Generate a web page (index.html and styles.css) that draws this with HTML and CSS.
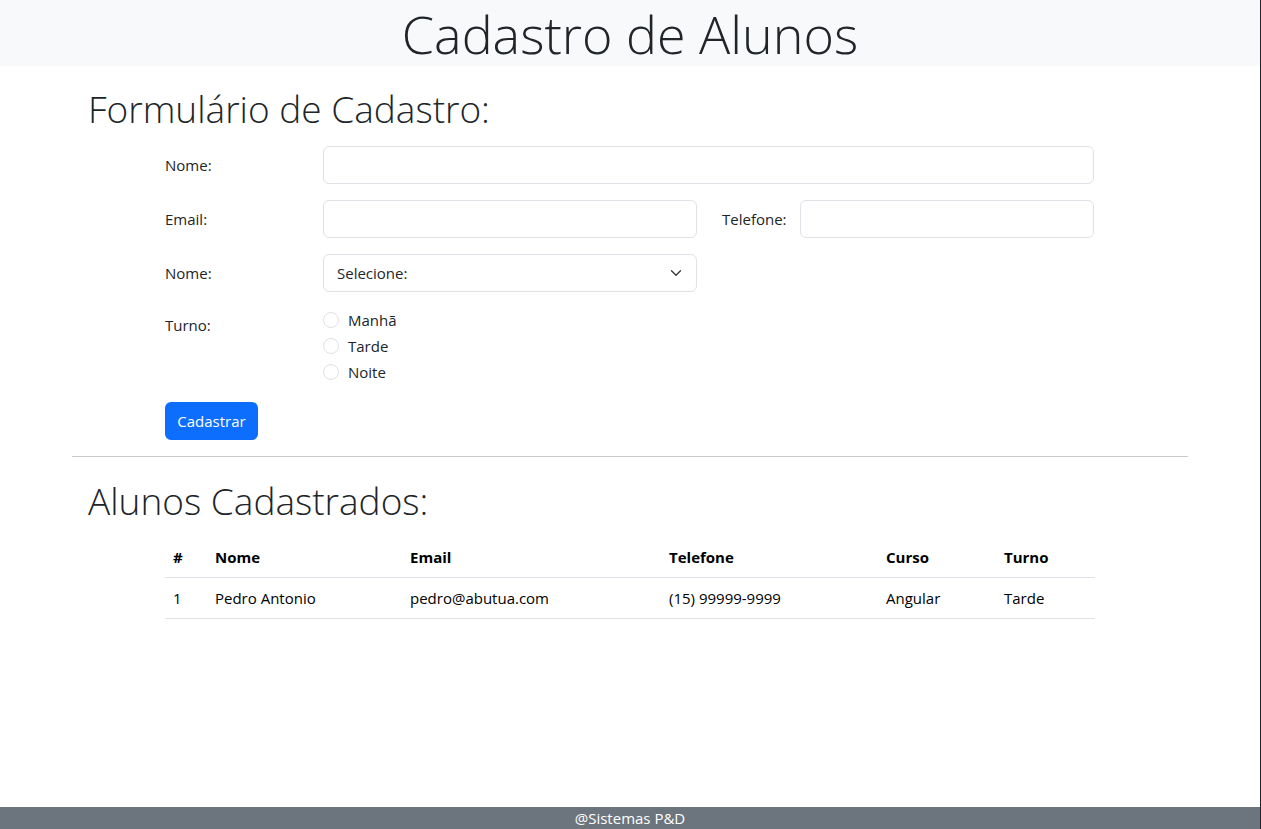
FILE: index.html
```html
<!DOCTYPE html>
<html lang="pt-BR">
<head>
<meta charset="utf-8">
<title>Cadastro de Alunos</title>
<link rel="stylesheet" href="styles.css">
</head>
<body>
<div class="page">
  <header class="topbar">
    <h1 class="topbar-title">Cadastro de Alunos</h1>
  </header>
  <main class="container">
    <h2 class="section-title">Formulário de Cadastro:</h2>
    <form class="form">
      <div class="form-row">
        <label class="form-label">Nome:</label>
        <input class="form-control full" type="text">
      </div>
      <div class="form-row">
        <label class="form-label">Email:</label>
        <input class="form-control half" type="text">
        <label class="form-label inline">Telefone:</label>
        <input class="form-control phone" type="text">
      </div>
      <div class="form-row">
        <label class="form-label">Nome:</label>
        <div class="form-select half">
          <span>Selecione:</span>
          <svg class="chevron" width="12" height="12" viewBox="0 0 16 16"><path d="M2 5l6 6 6-6" fill="none" stroke="#343a40" stroke-width="1.8" stroke-linecap="round" stroke-linejoin="round"/></svg>
        </div>
      </div>
      <div class="form-row top">
        <label class="form-label">Turno:</label>
        <div class="radios">
          <label class="radio"><span class="radio-circle"></span>Manhã</label>
          <label class="radio"><span class="radio-circle"></span>Tarde</label>
          <label class="radio"><span class="radio-circle"></span>Noite</label>
        </div>
      </div>
      <button class="btn" type="button">Cadastrar</button>
    </form>
    <hr class="divider">
    <h2 class="section-title second">Alunos Cadastrados:</h2>
    <table class="table">
      <thead>
        <tr><th class="c1">#</th><th class="c2">Nome</th><th class="c3">Email</th><th class="c4">Telefone</th><th class="c5">Curso</th><th class="c6">Turno</th></tr>
      </thead>
      <tbody>
        <tr><td>1</td><td>Pedro Antonio</td><td>pedro@abutua.com</td><td>(15) 99999-9999</td><td>Angular</td><td>Tarde</td></tr>
      </tbody>
    </table>
  </main>
  <footer class="footer">@Sistemas P&amp;D</footer>
</div>
</body>
</html>
```
FILE: styles.css
```css
* { box-sizing: border-box; }
html, body { margin: 0; padding: 0; height: 100%; }
body {
  font-family: "Open Sans", "Noto Sans", sans-serif;
  font-size: 15px;
  color: #212529;
  background: #fff;
}
.page {
  width: 1261px;
  min-height: 829px;
  border-right: 1px solid #202428;
  position: relative;
}
.topbar {
  background: #f8f9fa;
  height: 66px;
  padding-top: 5px;
  text-align: center;
}
.topbar-title {
  margin: 0;
  font-weight: 300;
  font-size: 52px;
  line-height: 58px;
}
.container {
  width: 1116px;
  margin: 0 auto 0 72px;
}
.section-title {
  margin: 0;
  padding-left: 16px;
  font-weight: 300;
  font-size: 37px;
  line-height: 48px;
  height: 80px;
  padding-top: 19px;
}
.form {
  margin-left: 93px;
  width: 930px;
}
.form-row {
  display: flex;
  align-items: center;
  margin-bottom: 16px;
}
.form-row.top { align-items: flex-start; margin-bottom: 17px; }
.form-label {
  width: 158px;
  flex: none;
  line-height: 38px;
}
.form-row.top .form-label { line-height: 24px; padding-top: 5px; }
.form-label.inline { width: 78px; margin-left: 25px; }
.form-control, .form-select {
  height: 38px;
  border: 1px solid #dee2e6;
  border-radius: 6px;
  background: #fff;
  font: inherit;
}
.full { width: 771px; }
.half { width: 374px; }
.phone { width: 294px; }
.form-select {
  display: flex;
  align-items: center;
  justify-content: space-between;
  padding: 0 14px 0 13px;
}
.chevron { width: 12px; height: 12px; }
.radios { display: flex; flex-direction: column; margin-top: -1px; }
.radio {
  display: flex;
  align-items: center;
  height: 26px;
  font-size: 15px;
}
.radio-circle {
  width: 16px;
  height: 16px;
  border: 1px solid #dee2e6;
  border-radius: 50%;
  margin-right: 9px;
}
.btn {
  background: #0d6efd;
  color: #fff;
  border: 0;
  border-radius: 6px;
  height: 38px;
  width: 93px;
  font: inherit;
  padding: 0;
  display: block;
}
.divider {
  border: 0;
  border-top: 1px solid #c9cacb;
  margin: 16px 0 0;
}
.section-title.second { height: 80px; padding-top: 20px; }
.table {
  margin-left: 93px;
  width: 930px;
  border-collapse: collapse;
  color: #000;
}
.table th, .table td {
  text-align: left;
  padding: 8px;
  line-height: 24px;
  border-bottom: 1px solid #dee2e6;
}
.table th { font-weight: 700; }
.c1 { width: 42px; }
.c2 { width: 195px; }
.c3 { width: 259px; }
.c4 { width: 217px; }
.c5 { width: 118px; }
.c6 { width: 99px; }
.footer {
  position: absolute;
  left: 0;
  right: 0;
  bottom: 0;
  height: 22px;
  background: #6c757d;
  color: #fff;
  text-align: center;
  font-size: 15px;
  line-height: 22px;
}
```
